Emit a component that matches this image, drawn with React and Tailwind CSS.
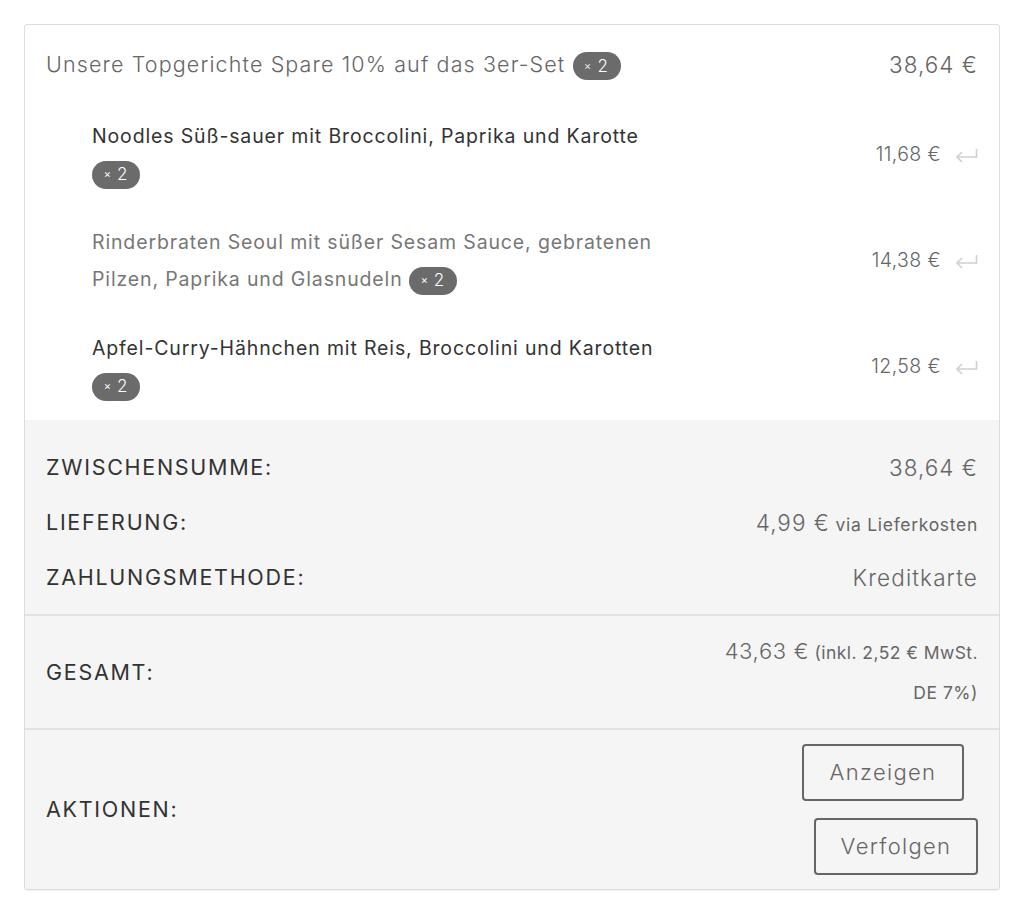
const Badge = () => (
  <span className="inline-flex h-[28px] w-[48px] items-center justify-center rounded-full bg-[#6b6b6b] align-middle text-white">
    <span className="text-[11px] leading-none mr-[5px]">×</span>
    <span className="text-[17px] leading-none font-light">2</span>
  </span>
);

const ReturnIcon = () => (
  <svg width="23" height="15" viewBox="0 0 23 15" fill="none" className="shrink-0">
    <polyline points="21.5,1 21.5,9 2,9" stroke="#cfcfcf" strokeWidth="1.6" fill="none" />
    <polyline points="7,4 2,9 7,14" stroke="#cfcfcf" strokeWidth="1.6" fill="none" />
  </svg>
);

const SubRow = ({ children, price, color }) => (
  <div className="flex items-center justify-between pl-[67px] pr-[21px] py-[16px]">
    <div className={`text-[19.5px] leading-[37px] tracking-[0.044em] ${color}`}>{children}</div>
    <div className="flex items-center gap-[14px]">
      <span className="text-[19.5px] font-light tracking-[0.02em] text-[#666]">{price}</span>
      <ReturnIcon />
    </div>
  </div>
);

const SumRow = ({ label, children }) => (
  <div className="flex h-[55px] items-center justify-between">
    <span className="text-[21.5px] tracking-[0.08em] text-[#333]">{label}</span>
    <span className="text-right text-[#666]">{children}</span>
  </div>
);

export default function App() {
  return (
    <div className="min-h-[915px] bg-white pt-[24px] pl-[24px]" style={{ fontFamily: "Inter, 'Noto Sans', sans-serif" }}>
      <div className="w-[976px] overflow-hidden rounded-[3px] border border-[#dcdcdc] shadow-[0_1px_1px_rgba(0,0,0,0.06)]">
        <div className="flex items-center justify-between pl-[21px] pr-[21px] pt-[21px] pb-[19px]">
          <div className="text-[21.5px] leading-[37px] font-light tracking-[0.052em] text-[#666]">
            Unsere Topgerichte Spare 10% auf das 3er-Set <Badge />
          </div>
          <span className="text-[22.5px] font-light tracking-[0.045em] text-[#666]">38,64 €</span>
        </div>

        <SubRow price="11,68 €" color="text-[#333]">
          <div>Noodles Süß-sauer mit Broccolini, Paprika und Karotte</div>
          <div><Badge /></div>
        </SubRow>
        <SubRow price="14,38 €" color="text-[#777]">
          <div>Rinderbraten Seoul mit süßer Sesam Sauce, gebratenen</div>
          <div>Pilzen, Paprika und Glasnudeln <Badge /></div>
        </SubRow>
        <SubRow price="12,58 €" color="text-[#333]">
          <div>Apfel-Curry-Hähnchen mit Reis, Broccolini und Karotten</div>
          <div><Badge /></div>
        </SubRow>

        <div className="bg-[#f5f5f5]">
          <div className="px-[21px] pt-[20px] pb-[9px]">
            <SumRow label="ZWISCHENSUMME:">
              <span className="text-[22.5px] font-light tracking-[0.045em]">38,64 €</span>
            </SumRow>
            <SumRow label="LIEFERUNG:">
              <span className="text-[22.5px] font-light tracking-[0.045em]">4,99 €</span>
              <span className="text-[17.5px] tracking-[0.04em]"> via Lieferkosten</span>
            </SumRow>
            <SumRow label="ZAHLUNGSMETHODE:">
              <span className="text-[22.5px] font-light tracking-[0.05em]">Kreditkarte</span>
            </SumRow>
          </div>

          <div className="flex items-center justify-between border-t-2 border-[#e2e2e2] px-[21px] py-[16px]">
            <span className="text-[21.5px] tracking-[0.08em] text-[#333]">GESAMT:</span>
            <div className="text-right text-[#666] leading-[39px]">
              <div>
                <span className="text-[22px] font-light tracking-[0.03em]">43,63 €</span>
                <span className="text-[17.5px] tracking-[0.025em]"> (inkl. 2,52 € MwSt.</span>
              </div>
              <div className="text-[17.5px] tracking-[0.03em]">DE 7%)</div>
            </div>
          </div>

          <div className="flex items-center justify-between border-t-2 border-[#e2e2e2] px-[21px] pt-[14px] pb-[14px]">
            <span className="text-[21.5px] tracking-[0.08em] text-[#333]">AKTIONEN:</span>
            <div className="flex flex-col items-end gap-[17px]">
              <button className="mr-[14px] h-[57px] w-[162px] rounded-[4px] border-2 border-[#666] text-[22px] font-light tracking-[0.06em] text-[#666]">
                Anzeigen
              </button>
              <button className="h-[57px] w-[164px] rounded-[4px] border-2 border-[#666] text-[22px] font-light tracking-[0.06em] text-[#666]">
                Verfolgen
              </button>
            </div>
          </div>
        </div>
      </div>
    </div>
  );
}
